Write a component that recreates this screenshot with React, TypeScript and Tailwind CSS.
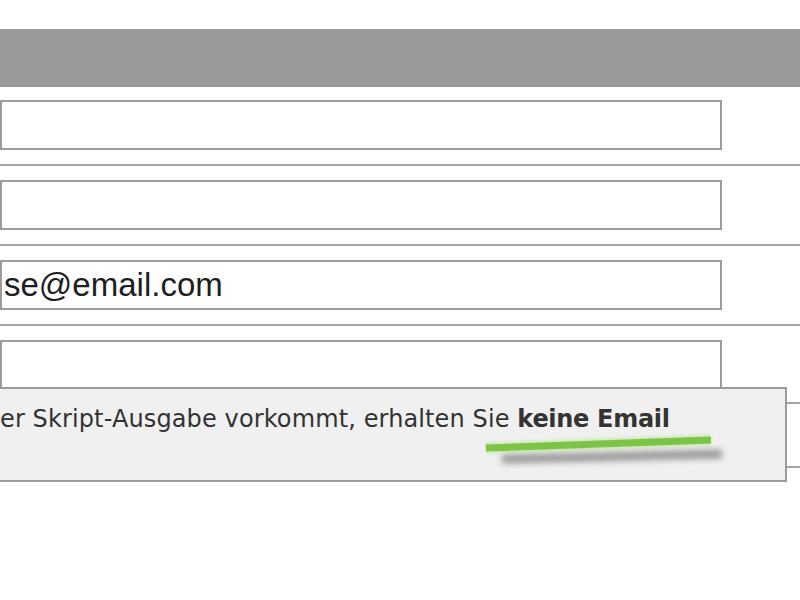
import React from "react";

function Field({ value }: { value?: string }) {
  return (
    <div className="w-[722px] h-[50px] border-2 border-[#9b9b9b] bg-white overflow-hidden">
      {value ? (
        <div className="pl-[2px] leading-[44px] pt-[1px] text-[33px] text-[#1e1e1e] whitespace-nowrap" style={{ fontFamily: '"Liberation Sans", Arial, sans-serif' }}>
          {value}
        </div>
      ) : null}
    </div>
  );
}

export default function App() {
  return (
    <div className="relative w-[800px] h-[600px] bg-white overflow-hidden">
      <div className="h-[29px]" />
      <div className="h-[58px] bg-[#9a9a9a]" />
      <div className="pt-[13px] pb-[14px] border-b-2 border-[#a4a4a4]">
        <Field />
      </div>
      <div className="pt-[14px] pb-[14px] border-b-2 border-[#a4a4a4]">
        <Field />
      </div>
      <div className="pt-[14px] pb-[14px] border-b-2 border-[#a4a4a4]">
        <Field value="se@email.com" />
      </div>
      <div className="pt-[14px] pb-[12px] border-b-2 border-[#a4a4a4]">
        <Field />
      </div>
      <div className="h-[64px] border-b-2 border-[#a4a4a4]" />

      <div className="absolute left-[-2px] top-[387px] w-[789px] h-[95px] border-2 border-[#9c9c9c] bg-[#f0f0f0]">
        <div
          className="pt-[18px] text-[24px] leading-none text-[#333333] whitespace-nowrap tracking-[0.12px]"
          style={{ fontFamily: '"DejaVu Sans", Verdana, sans-serif' }}
        >
          er Skript-Ausgabe vorkommt, erhalten Sie{" "}
          <span className="font-bold tracking-[-0.3px]">keine Email</span>
        </div>
        <svg className="absolute left-0 top-0" width="787" height="91" viewBox="0 0 787 91">
          <defs>
            <filter id="sh" x="-10%" y="-200%" width="120%" height="500%">
              <feGaussianBlur stdDeviation="3" />
            </filter>
            <filter id="gl" x="-10%" y="-200%" width="120%" height="500%">
              <feGaussianBlur stdDeviation="1.5" />
            </filter>
          </defs>
          <line x1="502" y1="70" x2="722" y2="65" stroke="#9a9a9a" strokeWidth="9" filter="url(#sh)" />
          <line x1="486" y1="59" x2="711" y2="51" stroke="#b8e68e" strokeWidth="11" opacity="0.6" filter="url(#gl)" />
          <line x1="486" y1="59" x2="711" y2="51" stroke="#7cc447" strokeWidth="7" />
        </svg>
      </div>
    </div>
  );
}
